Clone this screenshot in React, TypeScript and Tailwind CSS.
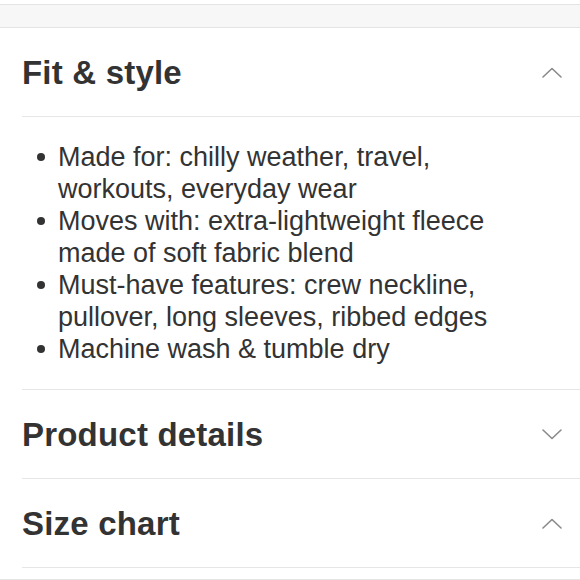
const fitItems = [
  "Made for: chilly weather, travel, workouts, everyday wear",
  "Moves with: extra-lightweight fleece made of soft fabric blend",
  "Must-have features: crew neckline, pullover, long sleeves, ribbed edges",
  "Machine wash & tumble dry",
];

function Chevron({ up }: { up: boolean }) {
  return (
    <svg width="20" height="11" viewBox="0 0 20 11" fill="none" className="shrink-0">
      <path
        d={up ? "M1 10 L10 1.5 L19 10" : "M1 1 L10 9.5 L19 1"}
        stroke="#8a8a8a"
        strokeWidth="1.6"
        strokeLinecap="round"
        strokeLinejoin="round"
      />
    </svg>
  );
}

function SectionHeader({ title, open }: { title: string; open: boolean }) {
  return (
    <div className="flex h-[88px] items-center justify-between pr-[18px]">
      <h2 className="text-[33px] font-bold leading-none tracking-[0.2px] text-[#333333]">{title}</h2>
      <Chevron up={open} />
    </div>
  );
}

export default function App() {
  return (
    <div
      className="h-[580px] w-[580px] overflow-hidden bg-white"
      style={{ fontFamily: '"Liberation Sans", Arial, sans-serif' }}
    >
      <div className="mt-[4px] h-[24px] border-y border-[#e4e4e4] bg-[#f7f7f7]" />

      <div className="ml-[22px]">
        <div className="border-b border-[#e6e6e6]">
          <SectionHeader title="Fit & style" open />
        </div>

        <ul className="border-b border-[#e6e6e6] pb-[24px] pr-[50px] pt-[24px]">
          {fitItems.map((item) => (
            <li key={item} className="flex text-[27px] leading-[32px] text-[#333333]">
              <span className="flex h-[32px] w-[36px] shrink-0 items-center pl-[15px]">
                <span className="size-[8px] rounded-full bg-[#333333]" />
              </span>
              <span>{item}</span>
            </li>
          ))}
        </ul>

        <div className="border-b border-[#e6e6e6]">
          <SectionHeader title="Product details" open={false} />
        </div>

        <div className="border-b border-[#e6e6e6]">
          <SectionHeader title="Size chart" open />
        </div>
      </div>

      <div className="mt-[11px] border-t border-[#e4e4e4]" />
    </div>
  );
}
